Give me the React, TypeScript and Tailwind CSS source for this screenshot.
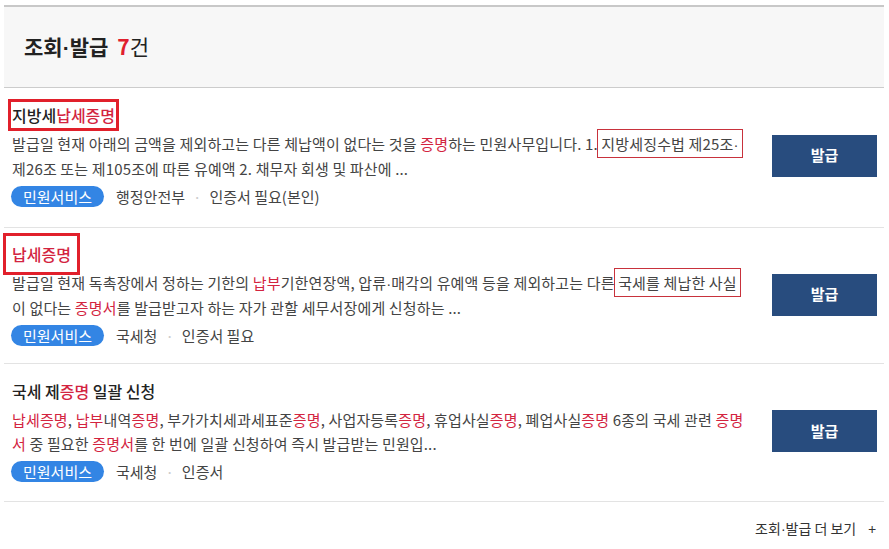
import { ReactNode } from "react";

const font = { fontFamily: '"Noto Sans CJK KR", "Noto Sans", sans-serif' };

function Red({ children }: { children: ReactNode }) {
  return <span className="text-[#d3243f]">{children}</span>;
}

// narrow middle dot (the CJK one is full width)
function Dot() {
  return <span className="font-['Liberation_Sans',sans-serif]">·</span>;
}

function Marked({ children }: { children: ReactNode }) {
  return (
    <span className="outline outline-1 outline-[#c8323c] outline-offset-[3px]">
      {children}
    </span>
  );
}

type Item = {
  title: ReactNode;
  lines: ReactNode[];
  org: string;
  cert: string;
  pad: string;
};

const items: Item[] = [
  {
    title: (
      <span className="outline outline-[3px] outline-[#e1202b] outline-offset-[1px]">
        지방세<Red>납세증명</Red>
      </span>
    ),
    lines: [
      <>
        발급일 현재 아래의 금액을 제외하고는 다른 체납액이 없다는 것을 <Red>증명</Red>하는 민원사무입니다. 1.{" "}
        <Marked>
          지방세징수법 제25조<Dot />
        </Marked>
      </>,
      <>제26조 또는 제105조에 따른 유예액 2. 채무자 회생 및 파산에 ...</>,
    ],
    org: "행정안전부",
    cert: "인증서 필요(본인)",
    pad: "pt-4 pb-5",
  },
  {
    title: (
      <span className="outline outline-[3px] outline-[#e1202b] outline-offset-[6px]">
        <Red>납세증명</Red>
      </span>
    ),
    lines: [
      <>
        발급일 현재 독촉장에서 정하는 기한의 <Red>납부</Red>기한연장액, 압류<Dot />매각의 유예액 등을 제외하고는 다른{" "}
        <Marked>국세를 체납한 사실</Marked>
      </>,
      <>
        이 없다는 <Red>증명서</Red>를 발급받고자 하는 자가 관할 세무서장에게 신청하는 ...
      </>,
    ],
    org: "국세청",
    cert: "인증서 필요",
    pad: "pt-[15px] pb-[17px]",
  },
  {
    title: (
      <>
        국세 제<Red>증명</Red> 일괄 신청
      </>
    ),
    lines: [
      <>
        <Red>납세증명</Red>, <Red>납부</Red>내역<Red>증명</Red>, 부가가치세과세표준<Red>증명</Red>, 사업자등록
        <Red>증명</Red>, 휴업사실<Red>증명</Red>, 폐업사실<Red>증명</Red> 6종의 국세 관련 <Red>증명</Red>
      </>,
      <>
        <Red>서</Red> 중 필요한 <Red>증명서</Red>를 한 번에 일괄 신청하여 즉시 발급받는 민원입...
      </>,
    ],
    org: "국세청",
    cert: "인증서",
    pad: "pt-4 pb-[19px]",
  },
];

export default function App() {
  return (
    <div className="bg-white w-[889px] h-[549px] overflow-hidden pt-[5px] pl-1 pr-[5px]" style={font}>
      <div className="border-t-2 border-[#c8c8c8]">
        <div className="h-[81px] bg-[#f7f7f7] border-b border-[#cccccc] flex items-center pl-5">
          <h2 className="text-[21px] font-bold text-[#222]">
            조회<Dot />발급
            <span className="ml-[9px] text-[#e0202e]">7</span>
            <span className="font-normal">건</span>
          </h2>
        </div>

        {items.map((item, i) => (
          <div key={i} className={`flex items-center border-b border-[#e3e3e3] pl-2 pr-[7px] ${item.pad}`}>
            <div className="flex-1">
              <h3 className="text-[16px] leading-[22px] font-medium text-[#222]">{item.title}</h3>
              <p className="mt-[6px] text-[15px] leading-6 text-[#444] whitespace-nowrap tracking-[0.01em]">
                {item.lines[0]}
                <br />
                {item.lines[1]}
              </p>
              <div className="mt-[5px] h-[21px] flex items-center text-[15px] leading-[21px] text-[#444]">
                <span className="h-[21px] px-3 -ml-px rounded-full bg-[#3385e4] text-white">민원서비스</span>
                <span className="ml-3">{item.org}</span>
                <span className="mx-2 text-[#ccc]">·</span>
                <span>{item.cert}</span>
              </div>
            </div>
            <button className="w-[105px] h-[42px] bg-[#284c7e] text-white text-[15px] font-bold shrink-0">
              발급
            </button>
          </div>
        ))}

        <div className="flex justify-end items-center pt-[16px] pr-2 text-[14px] text-[#333]">
          <span>
            조회<Dot />발급 더 보기
          </span>
          <span className="ml-3">+</span>
        </div>
      </div>
    </div>
  );
}
